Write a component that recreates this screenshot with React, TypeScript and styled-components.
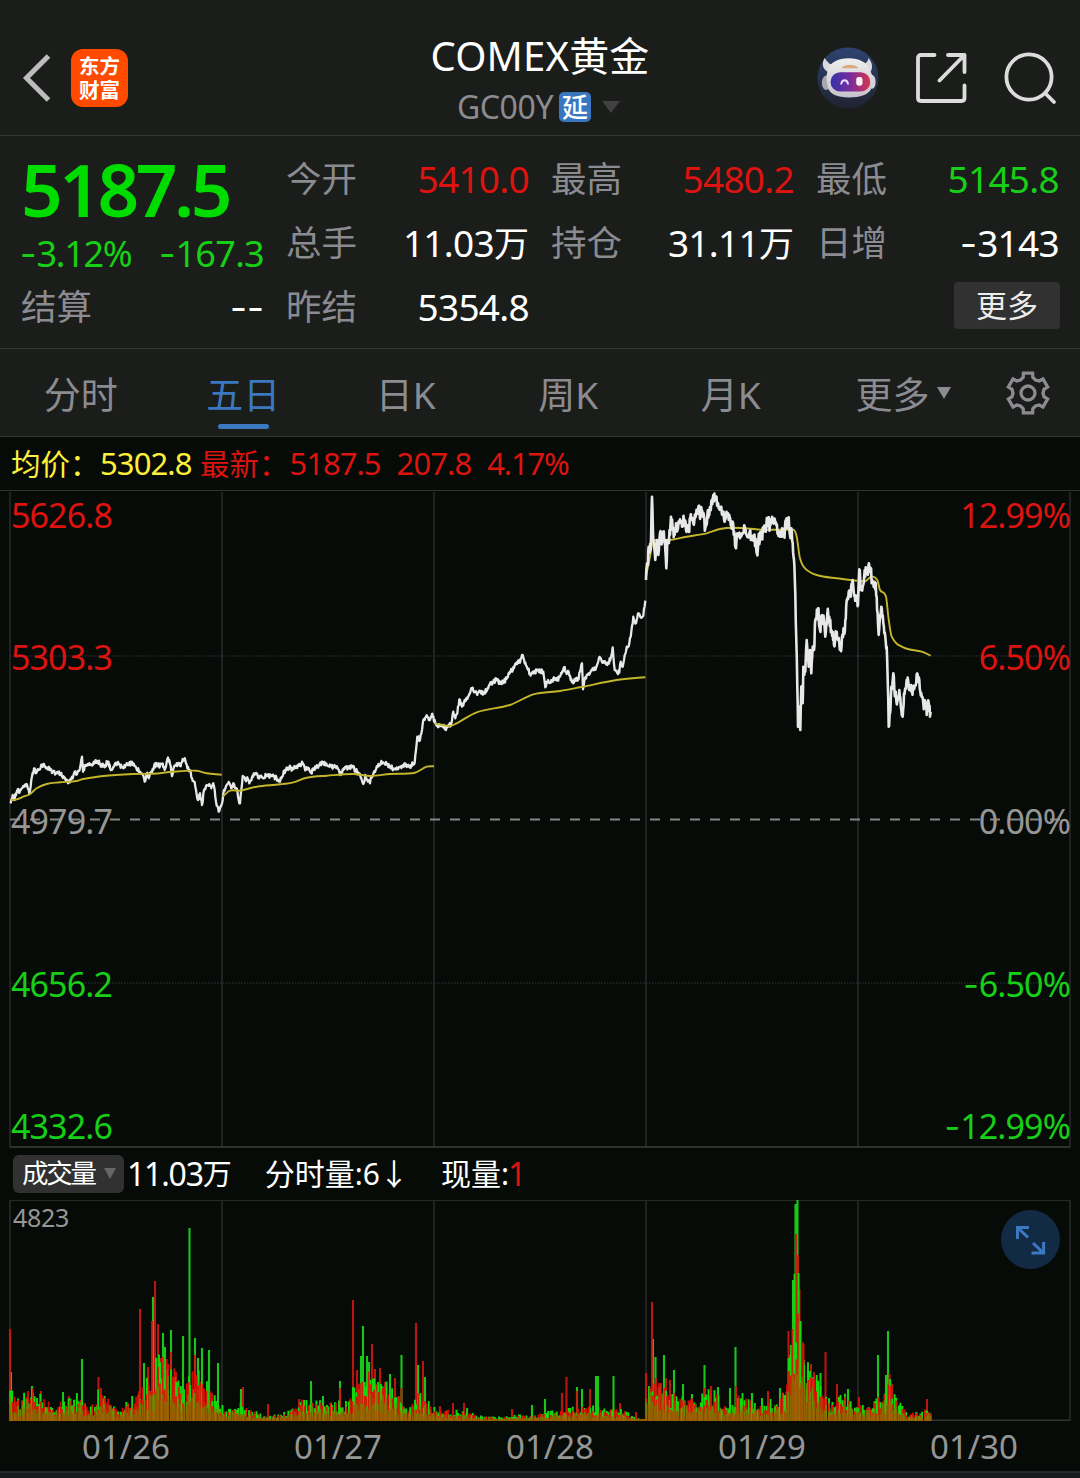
import React from "react";
import styled, { createGlobalStyle } from "styled-components";

const C = {
  panel: "#1a1d1a",
  chart: "#070b08",
  line: "#353735",
  grid: "#262826",
  gray: "#8b8b91",
  red: "#dc130f",
  green: "#18cf18",
  blue: "#3a78bf",
  white: "#ffffff",
  yellow: "#fdf03a",
};

const Global = createGlobalStyle`
  html, body { margin: 0; padding: 0; background: ${C.chart}; }
  * { box-sizing: border-box; }
`;

const Screen = styled.main`
  width: 1080px;
  height: 1478px;
  overflow: hidden;
  display: flex;
  flex-direction: column;
  background: ${C.chart};
  color: ${C.white};
  font-family: "Noto Sans", "Noto Sans CJK SC", sans-serif;
`;

const Text = styled.span<{ $size: number; $ls?: number; $color?: string; $weight?: number; $ml?: number }>`
  font-size: ${(p) => p.$size}px;
  letter-spacing: ${(p) => p.$ls ?? 0}px;
  color: ${(p) => p.$color ?? "inherit"};
  font-weight: ${(p) => p.$weight ?? 400};
  margin-left: ${(p) => p.$ml ?? 0}px;
  line-height: 1;
  white-space: pre;
`;

/* Minus signs use a wider dash than the digits' own family has. */
const Dash = styled.span`
  font-family: Inter, "Noto Sans", sans-serif;
  letter-spacing: 0;
`;
const Signed = ({ value }: { value: string }) => {
  const n = value.length - value.replace(/^-+/, "").length;
  return n ? <><Dash>{value.slice(0, n)}</Dash>{value.slice(n)}</> : <>{value}</>;
};

/* ---------- header ---------- */

const Header = styled.header`
  height: 136px;
  flex: none;
  display: grid;
  grid-template-columns: 1fr 300px 1fr;
  background: ${C.panel};
  border-bottom: 1px solid ${C.line};
`;
const HeaderLeft = styled.div`
  display: flex;
  align-items: center;
  gap: 19px;
  padding: 21px 0 0 22px;
`;
const HeaderRight = styled.div`
  display: flex;
  align-items: center;
  justify-content: flex-end;
  gap: 36px;
  padding: 20px 23px 0 0;
`;
const Logo = styled.div`
  width: 57px;
  height: 58px;
  border-radius: 12px;
  background: #ff4a00;
  display: flex;
  flex-direction: column;
  align-items: center;
  justify-content: center;
  padding-bottom: 2px;
  font: 700 20.500px/24px "Noto Sans CJK SC", sans-serif;
`;
const Titles = styled.div`
  display: flex;
  flex-direction: column;
  align-items: center;
  padding-top: 36px;
`;
const SubTitle = styled.div`
  display: flex;
  align-items: center;
  height: 32px;
  margin-top: 15px;
  padding-right: 3px;
`;
const DelayBadge = styled.span`
  width: 32px;
  height: 30px;
  border-radius: 5px;
  margin: 0 11px 0 6px;
  background: #3877c0;
  font: 500 26px/28px "Noto Sans CJK SC", sans-serif;
  text-align: center;
`;
const Triangle = styled.i<{ $w: number; $h: number; $color: string; $ml?: number }>`
  width: 0;
  height: 0;
  border-left: ${(p) => p.$w / 2}px solid transparent;
  border-right: ${(p) => p.$w / 2}px solid transparent;
  border-top: ${(p) => p.$h}px solid ${(p) => p.$color};
  margin-left: ${(p) => p.$ml ?? 0}px;
`;

const BackIcon = () => (
  <svg width="30" height="48" viewBox="0 0 30 48" fill="none" stroke="#bdbdbd" strokeWidth="5">
    <path d="M26.500 2 4.500 24 26.500 46" />
  </svg>
);

const RobotIcon = () => (
  <svg width="62" height="64" viewBox="0 0 64 64">
    <defs>
      <linearGradient id="sky" x1="0" y1="0" x2="0" y2="1">
        <stop offset="0" stopColor="#2d4370" />
        <stop offset="1" stopColor="#202331" />
      </linearGradient>
      <linearGradient id="visor" x1="0" y1="0" x2="1" y2="0">
        <stop offset="0" stopColor="#3531a8" />
        <stop offset="0.5" stopColor="#7a2c9c" />
        <stop offset="1" stopColor="#d8364f" />
      </linearGradient>
      <linearGradient id="shell" x1="0" y1="0" x2="0" y2="1">
        <stop offset="0" stopColor="#f1eeee" />
        <stop offset="1" stopColor="#c5c2cb" />
      </linearGradient>
    </defs>
    <circle cx="32" cy="32" r="31.500" fill="url(#sky)" />
    <path d="M8 11c-4 7-2 13 6 16l8-9c-6 2-11-1-14-7ZM53 11c5 6 5 12 1 16l-9-9c5 0 8-3 8-7Z" fill="#dcd9dd" />
    <ellipse cx="9.500" cy="37" rx="4.500" ry="7.500" fill="#a9a6af" />
    <ellipse cx="57" cy="36" rx="3.500" ry="7" fill="#d5d2d8" />
    <path d="M11 25C13 7 52 7 55 25c3 5 4 10 2 16-3 9-13 11-24 11-12 0-20-3-22-11-1-6-2-11 0-16Z" fill="url(#shell)" />
    <path d="M27 20c4-2 10-2 14 0l2 2H25Z" fill="#d9a880" />
    <rect x="14" y="26" width="41" height="20" rx="10" fill="url(#visor)" />
    <path d="M25 38c1-5 6-5 7 0" fill="none" stroke="#e4dcff" strokeWidth="2" strokeLinecap="round" />
    <rect x="40.500" y="31" width="6.500" height="9" rx="2.500" fill="#fff0f3" />
  </svg>
);

const ShareIcon = () => (
  <svg width="52" height="52" viewBox="-1 -0.500 52 52" fill="none" stroke="#dcdcdc" strokeWidth="3.800" strokeLinecap="round" strokeLinejoin="round">
    <path d="M18.500 2.500H5Q2 2.500 2 5.500V45.500Q2 48.500 5 48.500H45.500Q48.500 48.500 48.500 45.500V33M32 2.500H48.500V19.500M48.500 2.500 23.500 28" />
  </svg>
);

const SearchIcon = () => (
  <svg width="54" height="54" viewBox="0 0 54 54" fill="none" stroke="#dcdcdc" strokeWidth="3.800" strokeLinecap="round">
    <circle cx="26" cy="26" r="22.600" />
    <path d="m42 42 9 9" />
  </svg>
);

/* ---------- quote ---------- */

const Quote = styled.section`
  height: 213px;
  flex: none;
  padding: 11px 21px 0 21px;
  display: grid;
  grid-template-columns: repeat(4, 243px);
  grid-template-rows: repeat(3, 64px);
  column-gap: 22px;
  background: ${C.panel};
  border-bottom: 1px solid ${C.line};
`;
const PriceBox = styled.div`
  grid-row: span 2;
  display: flex;
  flex-direction: column;
  padding-top: 5px;
`;
const ChangeRow = styled.div`
  display: flex;
  justify-content: space-between;
  margin-top: 11px;
`;
const Cell = styled.div`
  display: flex;
  align-items: center;
  justify-content: space-between;
`;
const MoreCell = styled(Cell)`
  grid-column: 4;
  justify-content: flex-end;
`;
const MoreButton = styled.button`
  width: 106px;
  height: 47px;
  margin: 0 -1px 3px 0;
  border: 0;
  border-radius: 4px;
  background: #313131;
  color: #ececec;
  font: 400 31px/44px "Noto Sans CJK SC", sans-serif;
  padding: 0 0 3px;
`;

const FIELDS = [
  { label: "今开", value: "5410.0", color: C.red },
  { label: "最高", value: "5480.2", color: C.red },
  { label: "最低", value: "5145.8", color: C.green },
  { label: "总手", value: "11.03", unit: "万", color: C.white },
  { label: "持仓", value: "31.11", unit: "万", color: C.white },
  { label: "日增", value: "-3143", color: C.white },
  { label: "结算", value: "--", color: C.white },
  { label: "昨结", value: "5354.8", color: C.white },
];

const Field = ({ label, value, unit, color }: { label: string; value: string; unit?: string; color: string }) => (
  <Cell>
    <Text $size={35.5} $color={C.gray}>{label}</Text>
    <span>
      <Text $size={37} $color={color} $ls={-0.7}><Signed value={value} /></Text>
      {unit && <Text $size={35} $color={color}>{unit}</Text>}
    </span>
  </Cell>
);

/* ---------- tabs ---------- */

const Tabs = styled.nav`
  height: 88px;
  flex: none;
  display: grid;
  grid-template-columns: repeat(6, 162.500px) 105px;
  background: ${C.panel};
  border-bottom: 1px solid ${C.line};
`;
const Tab = styled.div<{ $active?: boolean }>`
  display: flex;
  flex-direction: column;
  align-items: center;
  padding: 27px 1px 0 0;
  font-size: 37px;
  line-height: 38px;
  color: ${(p) => (p.$active ? C.blue : C.gray)};
`;
const Underline = styled.i`
  width: 51px;
  height: 5px;
  border-radius: 3px;
  margin-top: 10px;
  background: ${C.blue};
`;
const TabMore = styled.div`
  display: flex;
  align-items: flex-start;
  padding: 27px 0 0 43px;
  font-size: 37px;
  line-height: 38px;
  color: ${C.gray};
`;
const MoreArrow = styled(Triangle)`
  margin-top: 11px;
`;
const GearCell = styled.div`
  display: flex;
  justify-content: center;
  padding-top: 22px;
`;

const gearPath = (() => {
  const pts: string[] = [];
  for (let i = 0; i < 6; i++) {
    const base = -90 + i * 60;
    const add = (deg: number, r: number) => {
      const a = ((base + deg) * Math.PI) / 180;
      pts.push(`${(22 + Math.cos(a) * r).toFixed(2)} ${(22 + Math.sin(a) * r).toFixed(2)}`);
    };
    add(-13, 20.5);
    add(13, 20.5);
    add(17, 16.4);
    add(30, 15);
    add(43, 16.4);
  }
  return `M${pts.join("L")}Z`;
})();

const GearIcon = () => (
  <svg width="44" height="44" viewBox="0 0 44 44" fill="none" stroke={C.gray} strokeWidth="3.300" strokeLinejoin="miter">
    <path d={gearPath} />
    <circle cx="22" cy="22" r="7" />
  </svg>
);

/* ---------- charts ---------- */

const Legend = styled.div`
  height: 54px;
  flex: none;
  display: flex;
  align-items: center;
  padding-left: 11px;
  border-bottom: 1px solid ${C.line};
`;
const PriceArea = styled.section`
  position: relative;
  height: 657px;
  flex: none;
`;
const AxisLabel = styled.span<{ $y: number; $right?: boolean; $color: string }>`
  position: absolute;
  top: ${(p) => p.$y - 491 - 20}px;
  ${(p) => (p.$right ? "right: 10px;" : "left: 11px;")}
  font-size: 34px;
  line-height: 40px;
  letter-spacing: -0.9px;
  color: ${(p) => p.$color};
`;
const VolumeBar = styled.div`
  height: 52px;
  flex: none;
  display: flex;
  align-items: center;
  padding: 0 0 1px 13px;
`;
const Pill = styled.div`
  width: 111px;
  height: 38px;
  border-radius: 6px;
  background: #313131;
  display: flex;
  align-items: center;
  padding: 0 0 1px 9px;
  margin-right: 3px;
`;
const VolumeArea = styled.section`
  position: relative;
  height: 221px;
  flex: none;
`;
const MaxVolume = styled.span`
  position: absolute;
  left: 13px;
  top: 2px;
  font-size: 25px;
  line-height: 30px;
  letter-spacing: -0.3px;
  color: #969696;
`;
const ExpandButton = styled.div`
  position: absolute;
  left: 1001px;
  top: 10px;
  width: 59px;
  height: 59px;
  border-radius: 50%;
  background: #132a45;
  display: grid;
  place-items: center;
`;
const Dates = styled.div`
  height: 50px;
  flex: none;
  display: grid;
  grid-template-columns: repeat(5, 212px);
  padding: 1px 0 0 20px;
  color: #969696;
  font-size: 33px;
  line-height: 50px;
  text-align: center;
`;
const Footer = styled.footer`
  flex: 1;
  background: #1a1c20;
  border-top: 2px solid #29292b;
`;

const noise = (seed: number) => {
  let s = seed;
  return () => {
    s = (s * 1664525 + 1013904223) >>> 0;
    return s / 4294967296;
  };
};

type P = [number, number];

const parse = (ox: number, oy: number, text: string): P[] =>
  text.trim().split(/\s+/).map((t) => {
    const [x, y] = t.split(",").map(Number);
    return [ox + x / 3, oy + y / 3] as P;
  });

const PRICE_A: P[] = [
  ...parse(0, 640, `32,490 38,465 42,480 50,455 62,450 70,438 80,432 88,462 94,420 102,385 108,400 116,390 122,382 130,372 138,385 150,385 158,395 170,400 182,402 192,412 206,425 214,418 222,400 232,400 240,385 246,350 249,395 256,375 270,375 280,370 292,363 304,375 316,375 324,365 334,390 342,380 352,370 360,375 370,385 382,372 400,370 410,388 420,395 428,402 434,425 440,400 446,415 454,395 462,380 470,370 480,378 486,372 494,390 502,358 508,360 516,408 522,380 530,370 540,378 548,357 556,360 562,385 570,390 576,415 582,425 588,450 594,480 600,460 606,495 612,450 620,435 628,432 634,445 640,430 644,450 648,485 656,515 662,500 668,480 672,450 680,435 688,430 694,445 702,432 710,445 716,480 720,490 724,450 728,408 736,420 744,418 748,430 756,412 766,400 776,410 786,412 800,405 812,408 826,412 838,425 846,410 856,390 868,383 880,388 890,378 900,378 906,365 914,385 926,385 932,398 942,385 956,378 970,367 984,378 1000,380 1012,382 1022,405 1030,390 1044,382 1058,380 1066,392 1078,400 1084,415 1090,432 1096,405 1104,425 1110,430 1114,410 1122,395 1132,382 1144,363 1152,370 1160,372 1170,380 1180,385 1194,388 1206,380 1218,375 1230,378 1244,368 1248,330 1252,290 1260,300 1266,270 1270,240 1278,230 1286,240 1296,222`),
  ...parse(420, 480, `38,710 46,730 56,740 66,735 76,745 84,740 94,732 100,695 106,715 112,700 118,658 126,680 134,660 144,650 150,640 156,625 164,635 172,645 180,635 190,638 200,632 210,612 220,605 230,598 240,610 252,605 262,592 272,575 282,565 294,542 300,548 306,525 314,550 322,565 330,580 340,580 350,570 360,575 370,575 376,622 384,600 392,608 400,595 410,600 420,590 432,562 440,582 446,575 452,600 460,610 468,595 474,600 480,575 486,550 489,628 494,595 502,585 510,580 518,565 528,565 540,532 548,548 556,545 562,555 572,535 578,502 584,570 590,575 598,578 602,545 608,560 614,525 620,500 628,490 634,455 640,410 648,430 654,400 660,408 670,408 676,362`),
];
const PRICE_B = parse(640, 480, `18,300 20,260 24,255 26,200 32,210 36,50 40,180 46,240 50,180 55,225 60,160 66,190 70,155 76,210 79,265 82,180 90,165 93,110 98,150 104,165 108,130 114,145 120,118 126,140 132,120 138,150 146,142 154,115 160,130 168,105 174,90 182,100 190,98 196,145 202,110 208,105 214,65 220,45 228,60 236,85 244,80 252,118 258,105 266,120 272,135 278,125 284,170 288,205 292,160 300,175 308,160 314,140 320,165 328,160 334,175 342,175 348,195 351,222 355,180 362,165 370,155 376,145 382,125 390,135 398,128 406,130 414,160 420,170 426,145 432,170 438,130 444,145 446,112 450,165 454,145 458,190 462,240 466,340 469,480 472,620 474,740 478,680 481,750 484,620 488,670 490,560 496,575 500,480 506,560 510,510 514,580 518,500 522,510 526,420 534,385 540,450 546,405 552,420 556,470 562,400 568,410 574,450 578,455 582,495 590,455 598,490 602,510 606,470 612,460 616,420 620,360 626,335 632,350 638,300 644,345 650,355 654,375 658,268 662,330 668,320 674,270 682,280 690,262 698,310 704,305 710,350 714,430 716,465 724,380 730,430 736,470 740,500 743,600 746,740 750,700 754,620 760,580 766,650 772,665 778,630 784,690 788,710 792,640 800,600 808,630 816,635 824,620 830,582 838,600 844,640 850,670 856,665 860,705 866,670 870,710 873,695`);

const AVERAGES = [
  parse(0, 640, `32,480 50,478 70,470 90,462 110,445 140,432 180,427 230,423 250,417 310,408 400,402 460,401 520,395 590,392 620,400 665,404`),
  parse(0, 640, `668,470 690,452 720,452 770,440 840,433 880,427 920,413 980,407 1060,402 1110,408 1170,402 1245,398 1280,380 1302,379`),
  parse(420, 480, `44,730 90,738 110,730 170,697 270,675 340,643 420,633 480,622 590,600 676,592`),
  parse(640, 480, `18,290 30,230 38,185 60,182 90,180 140,170 200,160 240,147 280,143 370,149 440,149 462,150 470,170 480,235 495,265 530,285 590,295 652,302`),
  parse(640, 480, `654,360 658,310 675,305 695,290 712,300 720,330 738,350 745,410 755,470 790,502 845,515 872,527`),
];

const toPath = (pts: P[]) => "M" + pts.map(([x, y]) => `${x.toFixed(1)} ${y.toFixed(1)}`).join("L");

const smooth = (pts: P[]) => {
  let d = `M${pts[0][0]} ${pts[0][1]}`;
  for (let i = 0; i < pts.length - 1; i++) {
    const a = pts[Math.max(0, i - 1)], b = pts[i], c = pts[i + 1], e = pts[Math.min(pts.length - 1, i + 2)];
    const k = (c[0] - b[0]) / 3;
    const m1 = (c[1] - a[1]) / Math.max(1, c[0] - a[0]);
    const m2 = (e[1] - b[1]) / Math.max(1, e[0] - b[0]);
    d += `C${(b[0] + k).toFixed(1)} ${(b[1] + k * m1).toFixed(1)} ${(c[0] - k).toFixed(1)} ${(c[1] - k * m2).toFixed(1)} ${c[0].toFixed(1)} ${c[1].toFixed(1)}`;
  }
  return d;
};

const ticks = (pts: P[], amp: number, step: number, seed: number) => {
  const rnd = noise(seed);
  const out: P[] = [];
  for (let i = 0; i < pts.length - 1; i++) {
    const [x0, y0] = pts[i];
    const [x1, y1] = pts[i + 1];
    const n = Math.max(2, Math.round((x1 - x0) / step));
    out.push([x0, y0]);
    for (let j = 1; j < n; j++) {
      const t = j / n;
      out.push([x0 + (x1 - x0) * t, y0 + (y1 - y0) * t + (rnd() - 0.5) * 2 * amp]);
    }
  }
  out.push(pts[pts.length - 1]);
  return out;
};

const DAY_LINES = [10, 222, 434, 646, 858, 1070];

const PriceChart = () => (
  <svg width="1080" height="657" viewBox="0 491 1080 657" display="block" fill="none">
    {DAY_LINES.map((x) => (
      <path key={x} d={`M${x} 492V1147`} stroke={C.grid} strokeWidth="1.700" />
    ))}
    <path d="M10 1147H1070" stroke="#303230" strokeWidth="2" />
    <path d="M10 656H1070M10 983H1070" stroke="#343634" strokeWidth="1" strokeDasharray="1.500 1.500" />
    <path d="M10 819.500H1070" stroke="#858585" strokeWidth="2" strokeDasharray="10 10" />
    <path d={toPath(ticks(PRICE_A, 2.3, 0.6, 7))} stroke="#e8e8e8" strokeWidth="2.300" strokeLinejoin="round" />
    {AVERAGES.map((a, i) => (
      <path key={i} d={smooth(a)} stroke="#c3b52c" strokeWidth="1.900" />
    ))}
    <path d={toPath(ticks(PRICE_B, 6.5, 0.5, 11))} stroke="#e8e8e8" strokeWidth="2.600" strokeLinejoin="round" />
  </svg>
);

const ENVELOPE: P[] = [
  [10, 25], [20, 15], [28, 28], [35, 25], [42, 20], [52, 12], [60, 15], [70, 20], [80, 20], [88, 8], [98, 22], [108, 18], [120, 10], [135, 20], [150, 35], [160, 60], [170, 45], [180, 30], [195, 40], [205, 30], [218, 18], [225, 8], [240, 14], [250, 8], [270, 4], [290, 8], [300, 16], [325, 14], [345, 15], [355, 28], [370, 40], [385, 30], [395, 22], [410, 10], [420, 28], [428, 14], [440, 9], [465, 7], [480, 4], [500, 3], [515, 5], [535, 5], [555, 8], [570, 10], [585, 12], [600, 10], [625, 8], [638, 2], [645, 2], [646, 25], [655, 40], [665, 25], [680, 18], [700, 20], [710, 25], [725, 12], [740, 20], [755, 16], [775, 18], [785, 25], [790, 60], [796, 130], [800, 80], [806, 45], [815, 35], [822, 22], [830, 14], [845, 20], [858, 14], [870, 12], [880, 18], [888, 35], [894, 20], [905, 8], [915, 6], [927, 10], [931, 4],
];

const GREEN_SPIKES = `11,1372 32,1386 63,1392 82,1359 144,1363 153,1297 163,1333 165,1347 171,1330 180,1387 183,1336 189.5,1228 190,1386 195,1338 198,1358 202,1348 209,1350 218,1363 241,1389 311,1381 323,1396 340,1381 361,1356 363,1326 367,1356 369,1362 390,1374 401.500,1355 418,1365 425,1377 467,1408 532,1405 545,1399 577,1387 582,1389 596,1376 598,1376 613.5,1376 653,1339 655.500,1357 664,1355 674,1370 683,1384 692,1394 704.5,1365 718,1387 730,1388 735.5,1347 752,1393 780,1388 791,1345 793,1280 795.5,1204 797.5,1200 804,1360 808,1370 820.5,1373 848,1389 878,1355 886,1375 888,1331`;
const RED_SPIKES = `10,1329 28,1391 41,1391 69,1396 98.5,1377 101,1388 140,1309 148,1367 152,1321 155,1281 158,1324 161,1358 168,1364 171,1352 173,1378 176,1372 195,1355 203,1388 212,1393 243,1387 268,1404 299,1399 340,1388 353,1300 357,1370 372,1344 375,1369 380,1368 385,1382 395,1378 401.500,1388 416,1323 423,1361 440,1406 453,1403 464,1403 512,1409 562,1393 566.5,1377 577,1391 590,1389 620,1403 636,1412 646,1373 652,1302 656,1378 666,1378 670,1380 705,1388 711,1386 736,1386 768,1391 788.5,1331 796,1234 798,1255 799.5,1289 803.500,1344 811,1364 814,1372 825.5,1352 837,1384 859,1397 878.500,1397 889.500,1374 892,1384 927,1399`;

const spikePath = (text: string) =>
  text.split(" ").map((t) => {
    const [x, y] = t.split(",");
    return `M${x} 1421V${y}`;
  }).join("");

const envelopeAt = (x: number) => {
  for (let i = 0; i < ENVELOPE.length - 1; i++) {
    const [x0, y0] = ENVELOPE[i];
    const [x1, y1] = ENVELOPE[i + 1];
    if (x >= x0 && x <= x1) return y0 + ((y1 - y0) * (x - x0)) / (x1 - x0);
  }
  return 3;
};

const volumeNoise = (seed: number, base: number, tall: number, curve: number) => {
  const rnd = noise(seed);
  let d = "";
  for (let x = 10; x < 932; x += 2) {
    const px = x + rnd();
    const h = Math.max(2, envelopeAt(x) * (base + tall * Math.pow(rnd(), curve)));
    d += `M${px.toFixed(1)} 1421V${(1421 - h).toFixed(1)}`;
  }
  return d;
};

const VolumeChart = () => (
  <svg width="1080" height="221" viewBox="0 1200 1080 221" display="block" fill="none">
    {DAY_LINES.map((x) => (
      <path key={x} d={`M${x} 1200V1421`} stroke={C.grid} strokeWidth="1.700" />
    ))}
    <path d="M10 1200.500H1070" stroke={C.grid} strokeWidth="1" />
    <path d="M10 1420.300H1070" stroke="#303230" strokeWidth="1.500" />
    <path d={spikePath(GREEN_SPIKES)} stroke="#1bc61b" strokeWidth="2.100" />
    <path d={spikePath(RED_SPIKES)} stroke="#d0150f" strokeWidth="2.100" opacity="0.900" />
    <path d={volumeNoise(5, 0.55, 0.9, 1)} stroke="#12d80c" strokeWidth="1.900" />
    <path d={volumeNoise(23, 0.4, 0.95, 1.2)} stroke="#e20b05" strokeWidth="1.700" opacity="0.900" />
    <path d={volumeNoise(41, 0.3, 0.65, 1.4)} stroke="#5c9a00" strokeWidth="1.300" opacity="0.850" />
    <path d={volumeNoise(77, 0.25, 0.4, 1.5)} stroke="#a85000" strokeWidth="1.300" opacity="0.700" />
  </svg>
);

const ExpandIcon = () => (
  <svg width="30" height="30" viewBox="1 0 30 30" fill="none" stroke="#3b79c2" strokeWidth="3">
    <path d="M14 2.400H2.400V14M2.400 2.400 13 12.500M28.600 17V28.100H16.500M28.600 28.100 18 18" />
  </svg>
);

const LABELS = [
  { y: 515, left: "5626.8", right: "12.99%", color: C.red },
  { y: 657, left: "5303.3", right: "6.50%", color: C.red },
  { y: 821, left: "4979.7", right: "0.00%", color: "#969696" },
  { y: 984, left: "4656.2", right: "-6.50%", color: C.green },
  { y: 1126, left: "4332.6", right: "-12.99%", color: C.green },
];

export default function App() {
  return (
    <Screen>
      <Global />
      <Header>
        <HeaderLeft>
          <BackIcon />
          <Logo><span>东方</span><span>财富</span></Logo>
        </HeaderLeft>
        <Titles>
          <Text $size={40} $ls={0.2}>COMEX黄金</Text>
          <SubTitle>
            <Text $size={32} $ls={-0.4} $color={C.gray}>GC00Y</Text>
            <DelayBadge>延</DelayBadge>
            <Triangle $w={18} $h={12} $color="#414141" />
          </SubTitle>
        </Titles>
        <HeaderRight>
          <RobotIcon />
          <ShareIcon />
          <SearchIcon />
        </HeaderRight>
      </Header>

      <Quote>
        <PriceBox>
          <Text $size={73} $ls={-3.5} $weight={600} $color="#00dc00">5187.5</Text>
          <ChangeRow>
            <Text $size={36} $ls={-1.3} $ml={-1} $color={C.green}><Signed value="-3.12%" /></Text>
            <Text $size={36} $ls={-0.7} $color={C.green}><Signed value="-167.3" /></Text>
          </ChangeRow>
        </PriceBox>
        {FIELDS.map((f) => <Field key={f.label} {...f} />)}
        <MoreCell><MoreButton>更多</MoreButton></MoreCell>
      </Quote>

      <Tabs>
        <Tab>分时</Tab>
        <Tab $active>五日<Underline /></Tab>
        <Tab>日K</Tab>
        <Tab>周K</Tab>
        <Tab>月K</Tab>
        <TabMore>
          更多
          <MoreArrow $w={14} $h={12} $color={C.gray} $ml={7} />
        </TabMore>
        <GearCell><GearIcon /></GearCell>
      </Tabs>

      <Legend>
        <Text $size={29.5} $color={C.yellow}>均价：</Text>
        <Text $size={31} $ls={-0.9} $ml={0.5} $color={C.yellow}>5302.8</Text>
        <Text $size={29.5} $ml={8.5} $color={C.red}>最新：</Text>
        <Text $size={31} $ls={-1} $ml={1} $color={C.red}>5187.5</Text>
        <Text $size={31} $ls={-0.9} $ml={16} $color={C.red}>207.8</Text>
        <Text $size={31} $ls={-1.2} $ml={16} $color={C.red}>4.17%</Text>
      </Legend>

      <PriceArea>
        <PriceChart />
        {LABELS.map((l) => (
          <React.Fragment key={l.y}>
            <AxisLabel $y={l.y} $color={l.color}>{l.left}</AxisLabel>
            <AxisLabel $y={l.y} $color={l.color} $right><Signed value={l.right} /></AxisLabel>
          </React.Fragment>
        ))}
      </PriceArea>

      <VolumeBar>
        <Pill>
          <Text $size={26.5} $ls={-2.2}>成交量</Text>
          <Triangle $w={13} $h={11} $color="#676767" $ml={9} />
        </Pill>
        <Text $size={32} $ls={-1.2}>11.03</Text>
        <Text $size={29}>万</Text>
        <Text $size={30} $ml={33}>分时量:6</Text>
        <Text $size={30} $ml={-1}>↓</Text>
        <Text $size={30} $ml={32}>现量:</Text>
        <Text $size={32} $ml={-1} $color={C.red}>1</Text>
      </VolumeBar>

      <VolumeArea>
        <VolumeChart />
        <MaxVolume>4823</MaxVolume>
        <ExpandButton><ExpandIcon /></ExpandButton>
      </VolumeArea>

      <Dates>
        {["01/26", "01/27", "01/28", "01/29", "01/30"].map((d) => <span key={d}>{d}</span>)}
      </Dates>
      <Footer />
    </Screen>
  );
}
